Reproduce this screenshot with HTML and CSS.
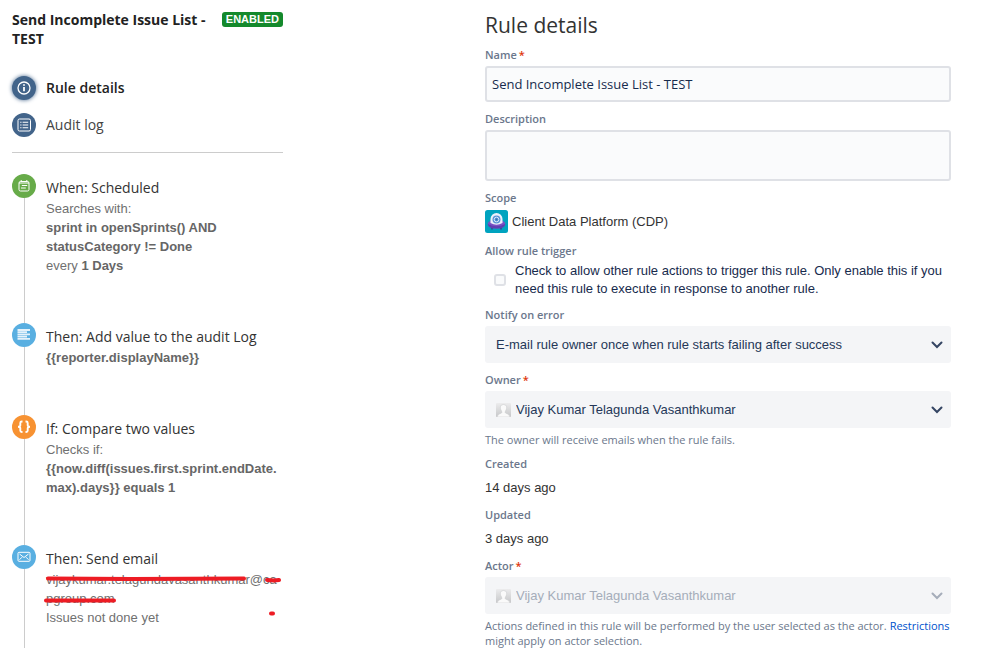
FILE: index.html
```html
<!DOCTYPE html>
<html lang="en">
<head>
<meta charset="utf-8">
<meta name="viewport" content="width=device-width, initial-scale=1">
<title>Rule details</title>
<link rel="stylesheet" href="styles.css">
</head>
<body>
<div class="page">
  <aside class="sidebar">
    <header class="rule-header">
      <h2 class="rule-name">Send Incomplete Issue List - TEST</h2>
      <span class="badge">ENABLED</span>
    </header>
    <nav class="rule-nav">
      <a class="nav-item nav-item-active" href="#details">
        <span class="dot dot-navy dot-glow"><svg viewBox="0 0 24 24" fill="none" stroke="#fff"><circle cx="12" cy="12" r="6" stroke-width="1.3"/><path d="M12 11v4.2" stroke-width="1.8"/><path d="M12 8.2v1.6" stroke-width="1.8"/></svg></span>
        Rule details
      </a>
      <a class="nav-item" href="#audit">
        <span class="dot dot-navy"><svg viewBox="0 0 24 24" fill="none" stroke="#fff"><rect x="6" y="6" width="12.5" height="12" rx="1.5" stroke-width="1"/><path d="M8.2 9.2h1.3M8.2 12h1.3M8.2 14.8h1.3M10.6 9.2h5.6M10.6 12h5.6M10.6 14.8h5.6" stroke-width="1.1"/></svg></span>
        Audit log
      </a>
    </nav>
    <ol class="steps">
      <li class="step">
        <span class="dot dot-green"><svg viewBox="0 0 24 24" fill="none" stroke="#fff" stroke-width="1"><rect x="7" y="7.5" width="10" height="9.5" rx="1.5"/><path d="M9.2 6v2M14.8 6v2M7 9h10M9.8 11.5h5.4M9 14h4.8"/></svg></span>
        <div class="step-body">
          <h3 class="step-title">When: Scheduled</h3>
          <p class="step-text">Searches with:<br><b>sprint in openSprints() AND statusCategory != Done</b><br>every <b>1 Days</b></p>
        </div>
      </li>
      <li class="step">
        <span class="dot dot-blue"><svg viewBox="0 0 24 24" fill="none" stroke="#e4f2fb" stroke-width="1.8"><path d="M5.5 7h12.5M5.5 9.2h9.5M5.5 11.4h12.5M5.5 13.6h9.5M5.5 15.8h12.5"/></svg></span>
        <div class="step-body">
          <h3 class="step-title">Then: Add value to the audit Log</h3>
          <p class="step-text"><b>{{reporter.displayName}}</b></p>
        </div>
      </li>
      <li class="step">
        <span class="dot dot-orange"><svg viewBox="0 0 24 24" fill="none" stroke="#fff" stroke-width="1.9"><path d="M10.500 6.500H9.800Q8.300 6.500 8.300 8V10.300Q8.300 11.800 6 11.800Q8.300 11.800 8.300 13.300V15.500Q8.300 17 9.800 17H10.500M13.500 6.500H14.200Q15.700 6.500 15.700 8V10.300Q15.700 11.800 18 11.800Q15.700 11.800 15.700 13.300V15.500Q15.700 17 14.200 17H13.500"/></svg></span>
        <div class="step-body">
          <h3 class="step-title">If: Compare two values</h3>
          <p class="step-text">Checks if:<br><b>{{now.diff(issues.first.sprint.endDate.<wbr>max).days}} equals 1</b></p>
        </div>
      </li>
      <li class="step">
        <span class="dot dot-blue"><svg viewBox="0 0 24 24" fill="none" stroke="#fff" stroke-width="1"><rect x="6" y="7.3" width="12" height="9" rx="1"/><path d="M7.5 9l4.5 3.5L16.5 9M7.5 14.7l2.5-2.5M16.5 14.7l-2.5-2.5"/></svg></span>
        <div class="step-body">
          <h3 class="step-title">Then: Send email</h3>
          <p class="step-text">vijaykumar.telagundavasanthkumar@ca<wbr>pgroup.com<br>Issues not done yet
            <svg class="marker" viewBox="0 0 240 48" fill="none" stroke="#ed1c24" stroke-width="4" stroke-linecap="round" aria-hidden="true"><path d="M6 7.500L90 8L202 7.500M225 9L232 9.500L237 9M4 29.500H72M229 42.500H231"/></svg>
          </p>
        </div>
      </li>
    </ol>
  </aside>

  <main class="details" id="details">
    <h1 class="heading">Rule details</h1>
    <form class="form">
      <div class="field">
        <label class="label" for="name">Name<span class="required">*</span></label>
        <input class="text-input" id="name" type="text" value="Send Incomplete Issue List - TEST">
      </div>
      <div class="field">
        <label class="label" for="description">Description</label>
        <textarea class="text-input text-area" id="description"></textarea>
      </div>
      <div class="field">
        <div class="label">Scope</div>
        <div class="scope">
          <svg class="scope-icon" viewBox="0 0 23 23"><rect width="23" height="23" rx="2.5" fill="#00a3bf"/><path d="M7 16.500v3M16 16.500v3" stroke="#403294" stroke-width="1.4"/><ellipse cx="11.5" cy="14" rx="8.8" ry="4.600" fill="#7a4fc4"/><path d="M2.700 14q8.800 4.500 17.600 0q-.5 4.600-8.800 4.600T2.700 14" fill="#5e3fb0"/><path d="M5.500 13V9a6 6 0 0 1 12 0V13Q11.500 16.500 5.500 13" fill="#edf0fb"/><circle cx="11.5" cy="9.500" r="4" fill="#5b94d6"/><circle cx="11.5" cy="9.500" r="2.300" fill="none" stroke="#d8e8fb"/><circle cx="11.5" cy="9.500" r="1" fill="#3572b0"/></svg>
          Client Data Platform (CDP)
        </div>
      </div>
      <div class="field">
        <div class="label">Allow rule trigger</div>
        <div class="check-row">
          <input class="check" id="allow" type="checkbox">
          <label for="allow">Check to allow other rule actions to trigger this rule. Only enable this if you need this rule to execute in response to another rule.</label>
        </div>
      </div>
      <div class="field">
        <label class="label" for="notify">Notify on error</label>
        <div class="select-wrap">
          <select class="select" id="notify"><option>E-mail rule owner once when rule starts failing after success</option></select>
          <svg class="chevron" viewBox="0 0 12 8"><path d="M1.5 1.5L6 6L10.5 1.5"/></svg>
        </div>
      </div>
      <div class="field">
        <label class="label" for="owner">Owner<span class="required">*</span></label>
        <div class="select-wrap">
          <svg class="avatar" viewBox="0 0 15 14"><defs><linearGradient id="shade" x2="0" y2="1"><stop stop-color="#ececed"/><stop offset="1" stop-color="#c6c7c9"/></linearGradient></defs><rect width="15" height="14" rx="1" fill="url(#shade)"/><path d="M1 14Q1.500 11 5.500 10Q6.300 9.500 5.500 8Q4 6 4.300 3.800Q5 1.500 7.500 1.500T10.700 3.800Q11 6 9.500 8Q8.700 9.500 9.500 10Q13.500 11 14 14Z" fill="#fafafa" stroke="#c4c6c9" stroke-width=".5"/></svg>
          <select class="select select-user" id="owner"><option>Vijay Kumar Telagunda Vasanthkumar</option></select>
          <svg class="chevron" viewBox="0 0 12 8"><path d="M1.5 1.5L6 6L10.5 1.5"/></svg>
        </div>
        <p class="hint">The owner will receive emails when the rule fails.</p>
      </div>
      <div class="field">
        <div class="label">Created</div>
        <div class="value">14 days ago</div>
      </div>
      <div class="field">
        <div class="label">Updated</div>
        <div class="value">3 days ago</div>
      </div>
      <div class="field">
        <label class="label" for="actor">Actor<span class="required">*</span></label>
        <div class="select-wrap select-wrap-disabled">
          <svg class="avatar" viewBox="0 0 15 14"><rect width="15" height="14" rx="1" fill="url(#shade)"/><path d="M1 14Q1.500 11 5.500 10Q6.300 9.500 5.500 8Q4 6 4.300 3.800Q5 1.500 7.500 1.500T10.700 3.800Q11 6 9.500 8Q8.700 9.500 9.500 10Q13.500 11 14 14Z" fill="#fafafa" stroke="#c4c6c9" stroke-width=".5"/></svg>
          <select class="select select-user" id="actor" disabled><option>Vijay Kumar Telagunda Vasanthkumar</option></select>
          <svg class="chevron" viewBox="0 0 12 8"><path d="M1.5 1.5L6 6L10.5 1.5"/></svg>
        </div>
        <p class="hint">Actions defined in this rule will be performed by the user selected as the actor. <a href="#restrictions">Restrictions</a> might apply on actor selection.</p>
      </div>
    </form>
  </main>
</div>
</body>
</html>
```
FILE: styles.css
```css
* {
  box-sizing: border-box;
}

body {
  margin: 0;
  background: #fff;
  color: #333;
  font: 13px/19px "Liberation Sans", Arial, sans-serif;
}

h1, h2, h3, p, ol {
  margin: 0;
  padding: 0;
}

.page {
  display: grid;
  grid-template-columns: 271px minmax(0, 1fr);
  gap: 202px;
  min-height: 100vh;
  padding: 0 48px 0 12px;
}

.rule-name, .nav-item, .step-title, .heading, .label, .hint {
  font-family: "Open Sans", "Noto Sans", sans-serif;
}

/* Sidebar */
.sidebar {
  display: flex;
  flex-direction: column;
  padding-top: 10px;
}

.rule-header {
  display: flex;
  align-items: flex-start;
  justify-content: space-between;
}

.rule-name {
  flex: 0 1 205px;
  color: #222;
  font-size: 14px;
  font-weight: 700;
  line-height: 19px;
}

.badge {
  margin-top: 2px;
  padding: 0 4px;
  border-radius: 3px;
  background: #14892c;
  color: #fff;
  font-size: 11px;
  font-weight: bold;
  line-height: 15px;
}

.rule-nav {
  display: flex;
  flex-direction: column;
  gap: 13px;
  padding: 28px 0 15px;
  border-bottom: 1px solid #ccc;
}

.nav-item {
  display: flex;
  align-items: center;
  gap: 10px;
  color: #444;
  font-size: 14px;
  line-height: 24px;
  text-decoration: none;
}

.nav-item-active {
  color: #222;
  font-weight: 600;
}

.dot {
  flex: none;
  width: 24px;
  height: 24px;
  border-radius: 50%;
}

.dot svg {
  display: block;
}

.dot-navy { background: #42648a; }
.dot-green { background: #67ab49; }
.dot-blue { background: #59afe1; }
.dot-orange { background: #f79232; }
.dot-glow { box-shadow: 0 0 4px #42648a; }

.steps {
  display: flex;
  flex: 1;
  flex-direction: column;
  padding-top: 21px;
  list-style: none;
}

.step {
  display: grid;
  grid-template-columns: 24px minmax(0, 1fr);
  grid-template-rows: 24px 1fr;
  column-gap: 10px;
}

.step::after {
  grid-area: 2 / 1;
  justify-self: center;
  width: 1px;
  background: #ccc;
  content: "";
}

.step:last-child {
  flex: 1;
}

.step-body {
  grid-area: 1 / 2 / 3 / 3;
  padding: 2px 0 48px;
}

.step:last-child .step-body {
  padding-bottom: 0;
}

.step-title {
  color: #333;
  font-size: 14px;
  font-weight: 400;
  line-height: 23px;
}

.step-text {
  position: relative;
  color: #707070;
}

.step-text b {
  color: #666;
}

.marker {
  position: absolute;
  top: 1px;
  left: -4px;
  width: 240px;
  height: 48px;
}

/* Details form */
.heading {
  padding: 9px 0 6px;
  color: #333;
  font-size: 21px;
  font-weight: 400;
  line-height: 32px;
}

.form {
  display: flex;
  flex-direction: column;
  gap: 9px;
}

.label {
  display: block;
  margin-bottom: 3px;
  color: #6b778c;
  font-size: 11px;
  font-weight: 600;
  line-height: 16px;
}

.required {
  padding-left: 2px;
  color: #de350b;
}

.text-input {
  display: block;
  width: 100%;
  height: 36px;
  padding: 0 5px;
  border: 2px solid #dfe1e6;
  border-radius: 3px;
  background: #fafbfc;
  color: #172b4d;
  font: 13px "Open Sans", "Noto Sans", sans-serif;
}

.text-area {
  height: 51px;
  resize: none;
}

.scope {
  display: flex;
  align-items: center;
  gap: 4px;
  height: 25px;
}

.scope-icon {
  width: 23px;
  height: 23px;
}

.check-row {
  display: flex;
  align-items: center;
  gap: 9px;
  padding-left: 9px;
  color: #172b4d;
  line-height: 18px;
}

.check {
  flex: none;
  width: 12px;
  height: 12px;
  margin: 0;
  border: 2px solid #dfe1e6;
  border-radius: 3px;
  background: #fafbfc;
  appearance: none;
}

.select-wrap {
  position: relative;
  color: #344563;
}

.select {
  display: block;
  width: 100%;
  height: 37px;
  padding: 0 32px 0 11px;
  border: 0;
  border-radius: 3px;
  background: #f4f5f7;
  color: #253858;
  font: inherit;
  appearance: none;
}

.select-user {
  padding-left: 31px;
}

.select-wrap-disabled,
.select:disabled {
  color: #a5adba;
  opacity: 1;
}

.avatar {
  position: absolute;
  top: 12px;
  left: 11px;
  width: 15px;
  height: 14px;
}

.chevron {
  position: absolute;
  top: 15px;
  right: 8px;
  width: 12px;
  height: 8px;
  fill: none;
  stroke: currentColor;
  stroke-width: 2;
  stroke-linecap: round;
  pointer-events: none;
}

.hint {
  padding-top: 4px;
  color: #6b778c;
  font-size: 11px;
  line-height: 15px;
}

.hint a {
  color: #0052cc;
  text-decoration: none;
}

.value {
  padding-top: 3px;
  line-height: 20px;
}
```
